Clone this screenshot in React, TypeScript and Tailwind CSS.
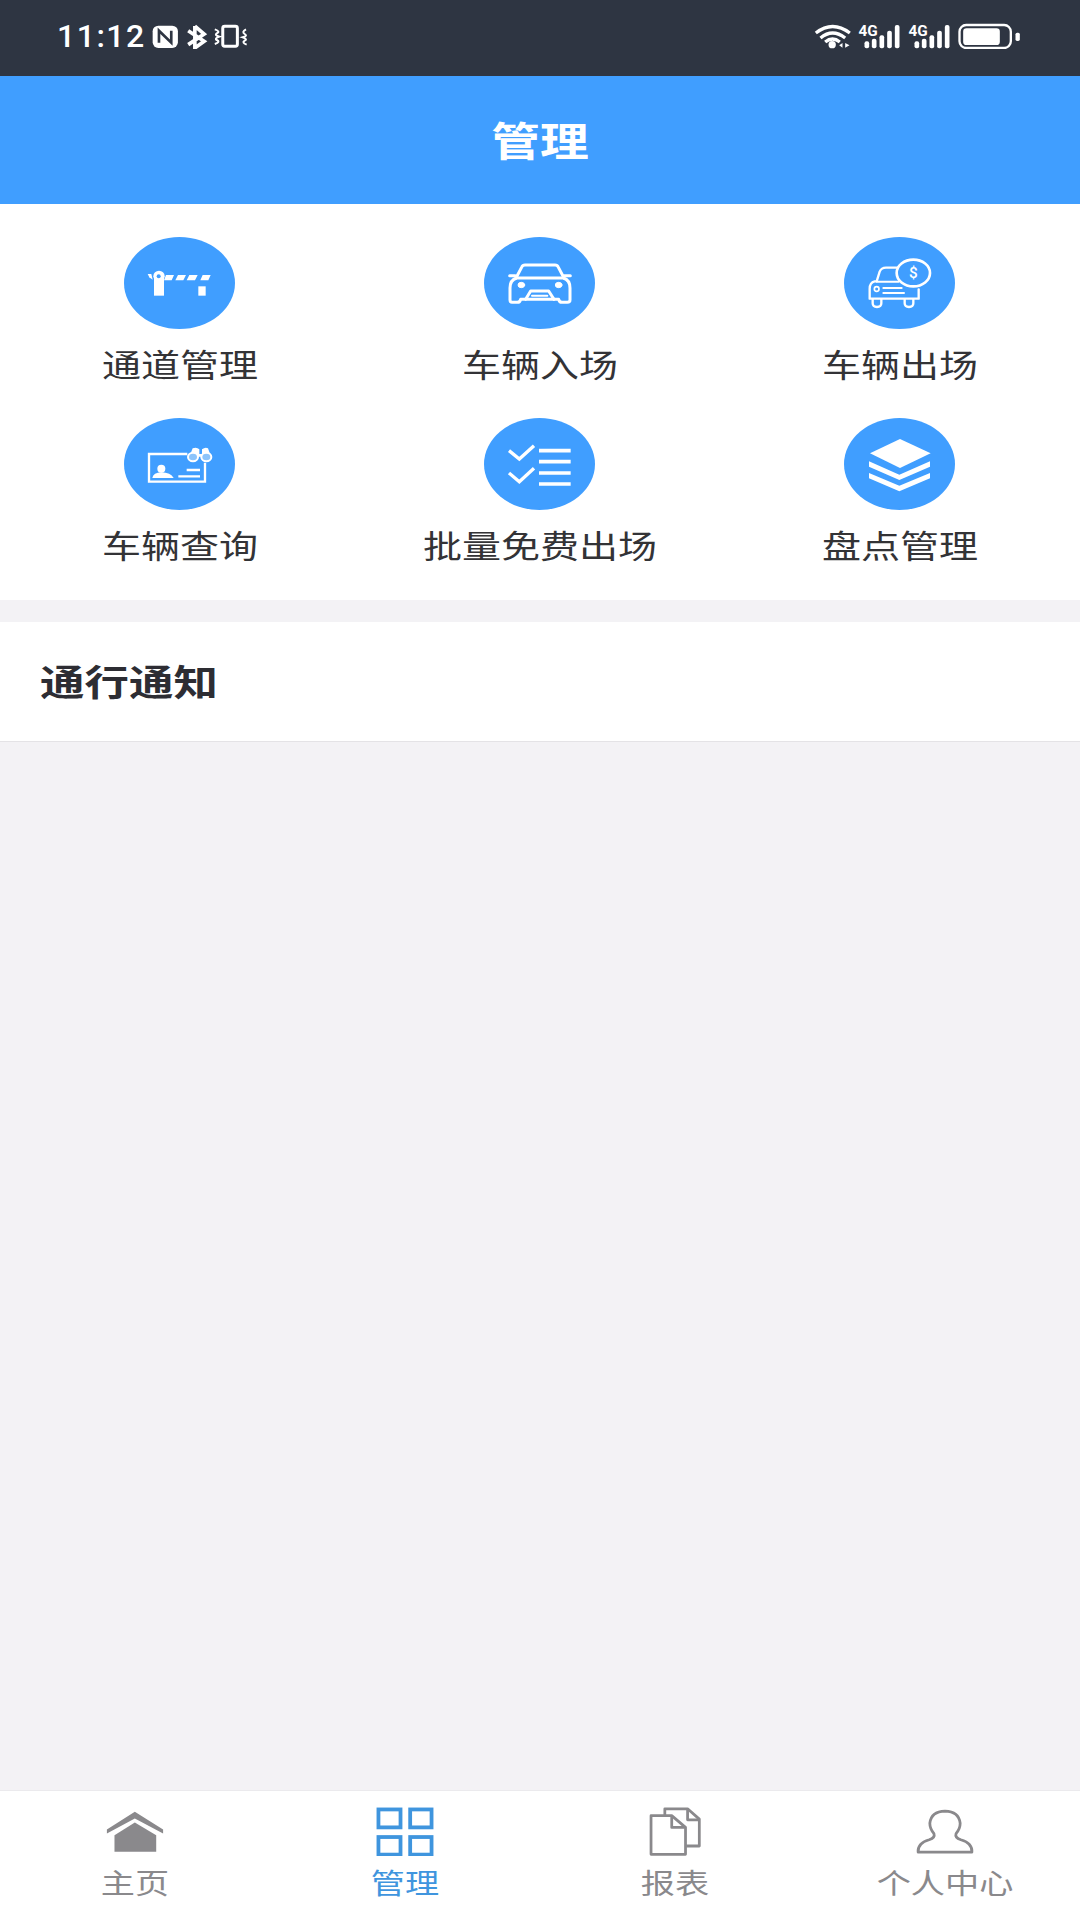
const cjk = "font-['Noto_Sans_CJK_SC','Noto_Sans',sans-serif]";

function Stretch({ children, className }: { children: string; className: string }) {
  return <span className={`inline-block scale-x-[1.22] whitespace-nowrap ${cjk} ${className}`}>{children}</span>;
}

function StatusLeft() {
  return (
    <svg width="98" height="25" viewBox="450 70 295 75" fill="none">
      <rect x="455" y="75" width="76" height="67" rx="17" fill="white" />
      <path d="M474 126V90L511 126V90" stroke="#2e3542" strokeWidth="8" />
      <path d="M582 76L610 100L562 132M562 90L610 122L582 142V76" stroke="white" strokeWidth="11" />
      <rect x="666" y="77" width="44" height="60" rx="6" stroke="white" strokeWidth="9" />
      <path d="M642 86Q660 92 648 98Q640 104 656 108Q640 114 648 118Q660 124 642 130M736 86Q722 94 732 100Q742 106 726 110Q742 116 732 120Q722 126 738 132" stroke="white" strokeWidth="6" />
    </svg>
  );
}

function StatusRight() {
  const bars = (x: number) => (
    <g fill="white">
      <rect x={x} y="122" width="14" height="21" rx="6" />
      <rect x={x + 22} y="114" width="14" height="29" rx="6" />
      <rect x={x + 45} y="104" width="14" height="39" rx="6" />
      <rect x={x + 68} y="90" width="14" height="53" rx="6" />
      <rect x={x + 91} y="73" width="14" height="70" rx="6" />
    </g>
  );
  return (
    <svg className="-mt-[10px]" width="207" height="35" viewBox="105 40 620 105" fill="none">
      <path d="M110 97Q160 58 212 97M124 112Q160 82 198 112M138 124Q160 106 182 124" stroke="white" strokeWidth="10" />
      <circle cx="159" cy="132" r="11" fill="white" />
      <path d="M190 127L180 134L190 141ZM198 127L211 134L198 141Z" fill="white" />
      <text x="238" y="106" fill="white" fontSize="46" fontWeight="700" fontFamily="Roboto, sans-serif">4G</text>
      <text x="388" y="106" fill="white" fontSize="46" fontWeight="700" fontFamily="Roboto, sans-serif">4G</text>
      {bars(256)}
      {bars(406)}
      <rect x="541" y="73" width="154" height="69" rx="20" stroke="white" strokeWidth="7" />
      <rect x="552" y="83" width="110" height="50" rx="10" fill="white" />
      <rect x="709" y="96" width="13" height="25" rx="5" fill="white" />
    </svg>
  );
}

function IconBarrier() {
  return (
    <svg width="111" height="91" viewBox="72 52 333 273">
      <g fill="white">
        <path d="M143 160L154 160L158 177L148 170Z" />
        <rect x="162" y="170" width="30" height="55" />
        <circle cx="177" cy="167" r="17" />
        <path d="M198 163H222L215 179H192ZM234 163H258L250 179H226ZM268 163H293L285 179H260ZM308 163H332L325 179H301Z" />
        <rect x="295" y="197" width="22" height="28" />
      </g>
      <circle cx="176" cy="167" r="6" fill="#409eff" />
    </svg>
  );
}

function IconCar() {
  return (
    <svg width="111" height="91" viewBox="72 52 333 273" fill="none" stroke="white" strokeWidth="9" strokeLinejoin="round" strokeLinecap="round">
      <path d="M150 202Q150 178 170 172H310Q330 178 330 202V238Q330 245 322 245H306Q298 245 296 236H182Q180 245 172 245H156Q150 245 150 238Z" />
      <path d="M168 172L186 138Q188 133 195 133H285Q292 133 294 138L312 172" />
      <path d="M149 165H166M312 165H331" />
      <path d="M197 236L212 211H266L282 236" />
      <path d="M216 225H262" strokeWidth="6" />
      <ellipse cx="184" cy="193" rx="10" ry="8" fill="white" strokeWidth="3" />
      <ellipse cx="296" cy="193" rx="10" ry="8" fill="white" strokeWidth="3" />
    </svg>
  );
}

function IconCoinCar() {
  return (
    <svg width="111" height="91" viewBox="72 52 333 273" fill="none" stroke="white" strokeWidth="7" strokeLinecap="round" strokeLinejoin="round">
      <path d="M238 141H198Q184 141 179 153L170 182H164Q149 186 149 204V234H296V206" />
      <path d="M158 236V248Q158 259 171 259Q184 259 184 248V236M254 236V248Q254 259 267 259Q280 259 280 248V236" />
      <circle cx="170" cy="205" r="7" strokeWidth="5" />
      <path d="M190 202H245M190 217H252M170 183H236" strokeWidth="6" />
      <ellipse cx="280" cy="157" rx="50" ry="40" strokeWidth="8" fill="#409eff" />
      <text x="280" y="173" fill="white" stroke="none" fontSize="46" fontWeight="500" textAnchor="middle" fontFamily="Roboto, sans-serif">$</text>
    </svg>
  );
}

function IconCard() {
  return (
    <svg width="111" height="91" viewBox="72 55 333 273" fill="none">
      <path d="M262 160H147V243H315V186" stroke="white" strokeWidth="7" />
      <circle cx="184" cy="204" r="12" fill="white" />
      <path d="M157 232Q160 216 184 215Q212 216 221 232Z" fill="white" />
      <path d="M260 208H300M235 227H300" stroke="white" strokeWidth="7" />
      <path d="M268 168L278 143Q290 138 298 146V160H306V146Q316 138 324 143L333 168Z" fill="white" />
      <ellipse cx="279" cy="169" rx="15" ry="13" fill="#8cc4fb" stroke="white" strokeWidth="6" />
      <ellipse cx="319" cy="169" rx="15" ry="13" fill="#8cc4fb" stroke="white" strokeWidth="6" />
    </svg>
  );
}

function IconChecklist() {
  return (
    <svg width="111" height="91" viewBox="72 55 333 273" fill="none" stroke="white">
      <path d="M147 150L178 175L222 135M147 217L178 243L222 203" strokeWidth="10" />
      <path d="M237 150H332M237 183H332M237 217H332M237 250H332" strokeWidth="11" />
    </svg>
  );
}

function IconLayers() {
  return (
    <svg width="111" height="91" viewBox="72 55 333 273" fill="white">
      <path d="M240 115L332 158L240 202L150 158Z" />
      <path d="M147 182L238 222L330 182V198L238 238L147 198Z" />
      <path d="M147 217L238 255L330 217V233L238 272L147 233Z" />
    </svg>
  );
}

function IconHome() {
  return (
    <svg width="70" height="50" viewBox="290 80 203 145" fill="#8a898c">
      <path d="M391 97L473 148V160L391 116L310 160V148Z" />
      <path d="M391 128L453 165V213H332V165Z" />
    </svg>
  );
}

function IconGrid() {
  return (
    <svg width="70" height="50" viewBox="1074.5 80 203 145" fill="none" stroke="#3f95de" strokeWidth="11">
      <rect x="1099" y="90" width="64" height="52" />
      <rect x="1191" y="90" width="62" height="52" />
      <rect x="1099" y="170" width="64" height="51" />
      <rect x="1191" y="170" width="62" height="51" />
    </svg>
  );
}

function IconFiles() {
  return (
    <svg width="70" height="50" viewBox="290 80 203 145" fill="none" stroke="#8a898c" strokeWidth="8" strokeLinejoin="round">
      <path d="M362 108V88H428L462 118V196H424" />
      <path d="M428 90V120H460" />
      <path d="M322 108H382L422 142V220H322Z" />
      <path d="M382 110V142H420" />
    </svg>
  );
}

function IconPerson() {
  return (
    <svg width="70" height="50" viewBox="1074.5 80 203 145" fill="none" stroke="#8a898c" strokeWidth="8" strokeLinejoin="round">
      <path d="M1098 214H1254Q1256 188 1222 178Q1204 172 1208 160Q1220 146 1220 130Q1216 96 1176 95Q1136 96 1132 130Q1132 146 1144 160Q1148 172 1130 178Q1096 188 1098 214Z" />
    </svg>
  );
}

const menu = [
  { label: "通道管理", icon: <IconBarrier /> },
  { label: "车辆入场", icon: <IconCar /> },
  { label: "车辆出场", icon: <IconCoinCar /> },
  { label: "车辆查询", icon: <IconCard /> },
  { label: "批量免费出场", icon: <IconChecklist /> },
  { label: "盘点管理", icon: <IconLayers /> },
];

const tabs = [
  { label: "主页", icon: <IconHome />, color: "text-[#8a898c]" },
  { label: "管理", icon: <IconGrid />, color: "text-[#3f95de]" },
  { label: "报表", icon: <IconFiles />, color: "text-[#8a898c]" },
  { label: "个人中心", icon: <IconPerson />, color: "text-[#8a898c]" },
];

export default function App() {
  return (
    <div className="flex h-[1920px] w-[1080px] flex-col overflow-hidden bg-[#f3f2f5]">
      <div className="flex h-[76px] items-center justify-between bg-[#2e3542] pb-[4px] pl-[57px] pr-[59px]">
        <div className="flex items-center gap-[5px]">
          <span className="font-['Roboto',sans-serif] text-[32px] font-medium leading-none tracking-[1.5px] text-white">11:12</span>
          <StatusLeft />
        </div>
        <StatusRight />
      </div>

      <div className="flex h-[128px] items-center justify-center bg-[#409eff] pb-[2px]">
        <Stretch className="text-[40px] font-bold leading-none text-white">管理</Stretch>
      </div>

      <div className="grid grid-cols-3 gap-y-[32px] bg-white pb-[33px] pt-[33px]">
        {menu.map((m) => (
          <div key={m.label} className="flex flex-col items-center">
            <div className="mr-[2px] flex h-[92px] w-[111px] items-center rounded-[50%] bg-[#409eff]">{m.icon}</div>
            <div className="mt-[11px] flex h-[46px] items-center">
              <Stretch className="text-[32px] leading-[46px] text-[#333336]">{m.label}</Stretch>
            </div>
          </div>
        ))}
      </div>

      <div className="mt-[22px] flex h-[120px] items-center border-b border-[#e4e3e6] bg-white pl-[40px]">
        <span className="inline-block origin-left scale-x-[1.235]">
          <span className={`whitespace-nowrap text-[36px] font-bold leading-none text-[#2d2d33] ${cjk}`}>通行通知</span>
        </span>
      </div>

      <div className="flex-1" />

      <div className="grid h-[130px] grid-cols-4 border-t border-[#ebeaed] bg-white pt-[15px]">
        {tabs.map((t) => (
          <div key={t.label} className="flex flex-col items-center">
            {t.icon}
            <div className="mt-[8px] flex h-[36px] items-center">
              <Stretch className={`text-[28px] leading-[36px] ${t.color}`}>{t.label}</Stretch>
            </div>
          </div>
        ))}
      </div>
    </div>
  );
}
